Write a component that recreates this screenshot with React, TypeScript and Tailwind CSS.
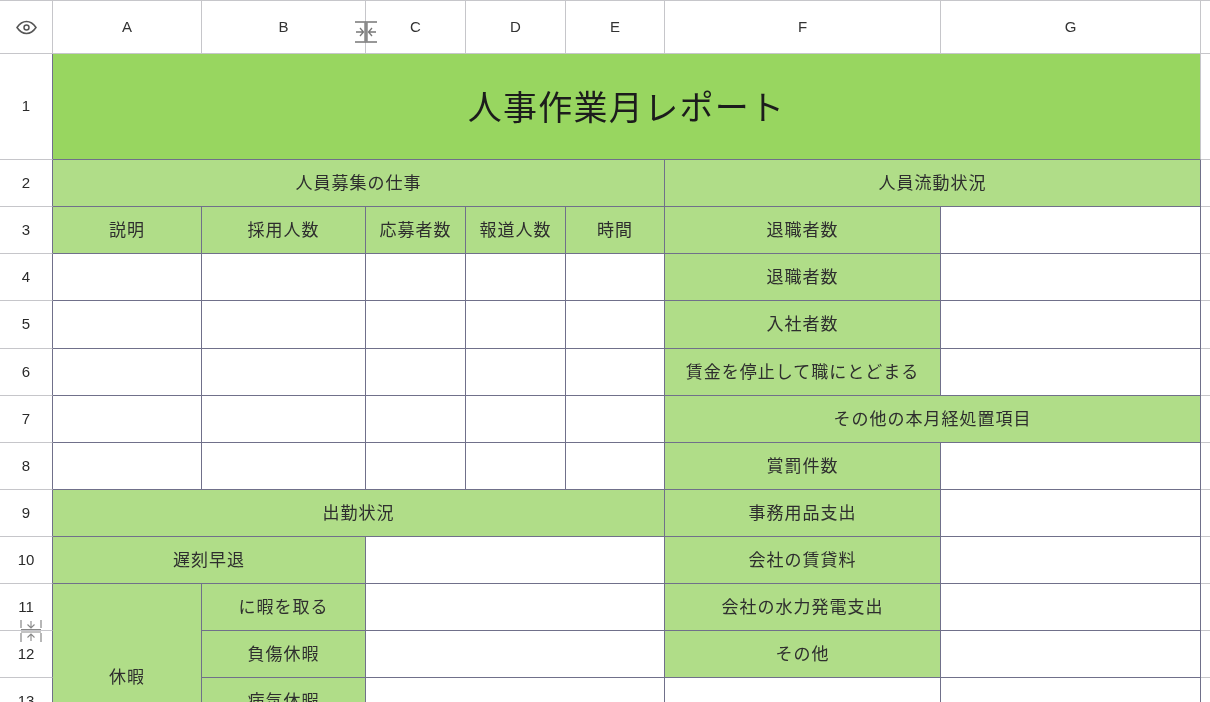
const head = 'flex items-center justify-center border-r border-b border-[#c6c6ca] bg-white pt-[1px] text-[15px] text-[#333]'
const rowNo = 'flex items-center justify-center border-r border-b border-r-[#70708a] border-b-[#c6c6ca] bg-white text-[15px] text-[#2a2a2a]'
const green = "flex items-center justify-center border-r border-b border-[#70708a] bg-[#b0dd88] pb-[3px] text-[17px] tracking-[1px] text-[#2e2e2e] font-['Noto_Sans_CJK_JP',sans-serif]"
const blank = 'border-r border-b border-[#70708a] bg-white'
const edge = 'border-b border-[#c6c6ca] bg-white'

const columns = ['A', 'B', 'C', 'D', 'E', 'F', 'G']

function Eye() {
  return (
    <svg width="21" height="15" viewBox="0 0 21 15" fill="none" stroke="#555" strokeWidth="1.5">
      <path d="M1 7.500c2.700-4 5.800-6 9.500-6s6.800 2 9.500 6c-2.700 4-5.800 6-9.500 6s-6.800-2-9.500-6z" />
      <circle cx="10.500" cy="7.500" r="2.500" />
    </svg>
  )
}

// column resize cursor, the row one is the same thing turned and split at the ends
function ColumnHandle() {
  return (
    <svg width="24" height="24" viewBox="0 0 24 24" fill="none" stroke="#777" className="pointer-events-none absolute left-[354px] top-[20px]">
      <path d="M1 2h22M1 22h22" strokeWidth="1.300" />
      <path d="M12 2v20" strokeWidth="3.500" stroke="#8a8a8a" />
      <path d="M2 12h7.500M6 8 9.500 12 6 16M22 12h-7.500M18 8l-3.500 4 3.500 4" strokeWidth="1.300" />
    </svg>
  )
}

function RowHandle() {
  return (
    <svg width="24" height="24" viewBox="0 0 24 24" fill="none" stroke="#888" className="pointer-events-none absolute left-[19px] top-[619px]">
      <path d="M2 1v8M22 1v8M2 14v9M22 14v9" strokeWidth="1.200" />
      <path d="M2 10.500h20M2 13h20" strokeWidth="1" />
      <path d="M12 2v7M8.500 5.500 12 9l3.500-3.500M12 22v-7M8.500 18.500 12 15l3.500 3.500" strokeWidth="1.100" />
    </svg>
  )
}

export default function App() {
  return (
    <div className="relative h-[702px] w-[1210px] overflow-hidden bg-white blur-[0.6px] font-['Liberation_Sans',sans-serif]">
      <div className="grid grid-cols-[53px_149px_164px_100px_100px_99px_276px_260px_9px] grid-rows-[53px_106px_47px_47px_47px_48px_47px_47px_47px_47px_47px_47px_47px_47px_47px] border-t border-[#c6c6ca]">
        <div className={head}>
          <Eye />
        </div>
        {columns.map((c) => (
          <div key={c} className={head}>
            {c}
          </div>
        ))}
        <div className={edge} />

        <div className={rowNo}>1</div>
        <div className="col-span-7 flex items-center justify-center border-r border-b border-r-[#c6c6ca] border-b-[#70708a] bg-[#98d660] pb-[3px] font-['Noto_Sans_CJK_JP',sans-serif] text-[34px] tracking-[1.300px] text-[#1c1c1c]">
          人事作業月レポート
        </div>
        <div className={edge} />

        <div className={rowNo}>2</div>
        <div className={`${green} col-span-5`}>人員募集の仕事</div>
        <div className={`${green} col-span-2`}>人員流動状況</div>
        <div className={edge} />

        <div className={rowNo}>3</div>
        <div className={green}>説明</div>
        <div className={green}>採用人数</div>
        <div className={green}>応募者数</div>
        <div className={green}>報道人数</div>
        <div className={green}>時間</div>
        <div className={green}>退職者数</div>
        <div className={blank} />
        <div className={edge} />

        <div className={rowNo}>4</div>
        <div className={blank} />
        <div className={blank} />
        <div className={blank} />
        <div className={blank} />
        <div className={blank} />
        <div className={green}>退職者数</div>
        <div className={blank} />
        <div className={edge} />

        <div className={rowNo}>5</div>
        <div className={blank} />
        <div className={blank} />
        <div className={blank} />
        <div className={blank} />
        <div className={blank} />
        <div className={green}>入社者数</div>
        <div className={blank} />
        <div className={edge} />

        <div className={rowNo}>6</div>
        <div className={blank} />
        <div className={blank} />
        <div className={blank} />
        <div className={blank} />
        <div className={blank} />
        <div className={green}>賃金を停止して職にとどまる</div>
        <div className={blank} />
        <div className={edge} />

        <div className={rowNo}>7</div>
        <div className={blank} />
        <div className={blank} />
        <div className={blank} />
        <div className={blank} />
        <div className={blank} />
        <div className={`${green} col-span-2`}>その他の本月経処置項目</div>
        <div className={edge} />

        <div className={rowNo}>8</div>
        <div className={blank} />
        <div className={blank} />
        <div className={blank} />
        <div className={blank} />
        <div className={blank} />
        <div className={green}>賞罰件数</div>
        <div className={blank} />
        <div className={edge} />

        <div className={rowNo}>9</div>
        <div className={`${green} col-span-5`}>出勤状況</div>
        <div className={green}>事務用品支出</div>
        <div className={blank} />
        <div className={edge} />

        <div className={rowNo}>10</div>
        <div className={`${green} col-span-2`}>遅刻早退</div>
        <div className={`${blank} col-span-3`} />
        <div className={green}>会社の賃貸料</div>
        <div className={blank} />
        <div className={edge} />

        <div className={rowNo}>11</div>
        <div className={`${green} row-span-4`}>休暇</div>
        <div className={green}>に暇を取る</div>
        <div className={`${blank} col-span-3`} />
        <div className={green}>会社の水力発電支出</div>
        <div className={blank} />
        <div className={edge} />

        <div className={rowNo}>12</div>
        <div className={green}>負傷休暇</div>
        <div className={`${blank} col-span-3`} />
        <div className={green}>その他</div>
        <div className={blank} />
        <div className={edge} />

        <div className={rowNo}>13</div>
        <div className={green}>病気休暇</div>
        <div className={`${blank} col-span-3`} />
        <div className={blank} />
        <div className={blank} />
        <div className={edge} />
      </div>

      <ColumnHandle />
      <RowHandle />
    </div>
  )
}
